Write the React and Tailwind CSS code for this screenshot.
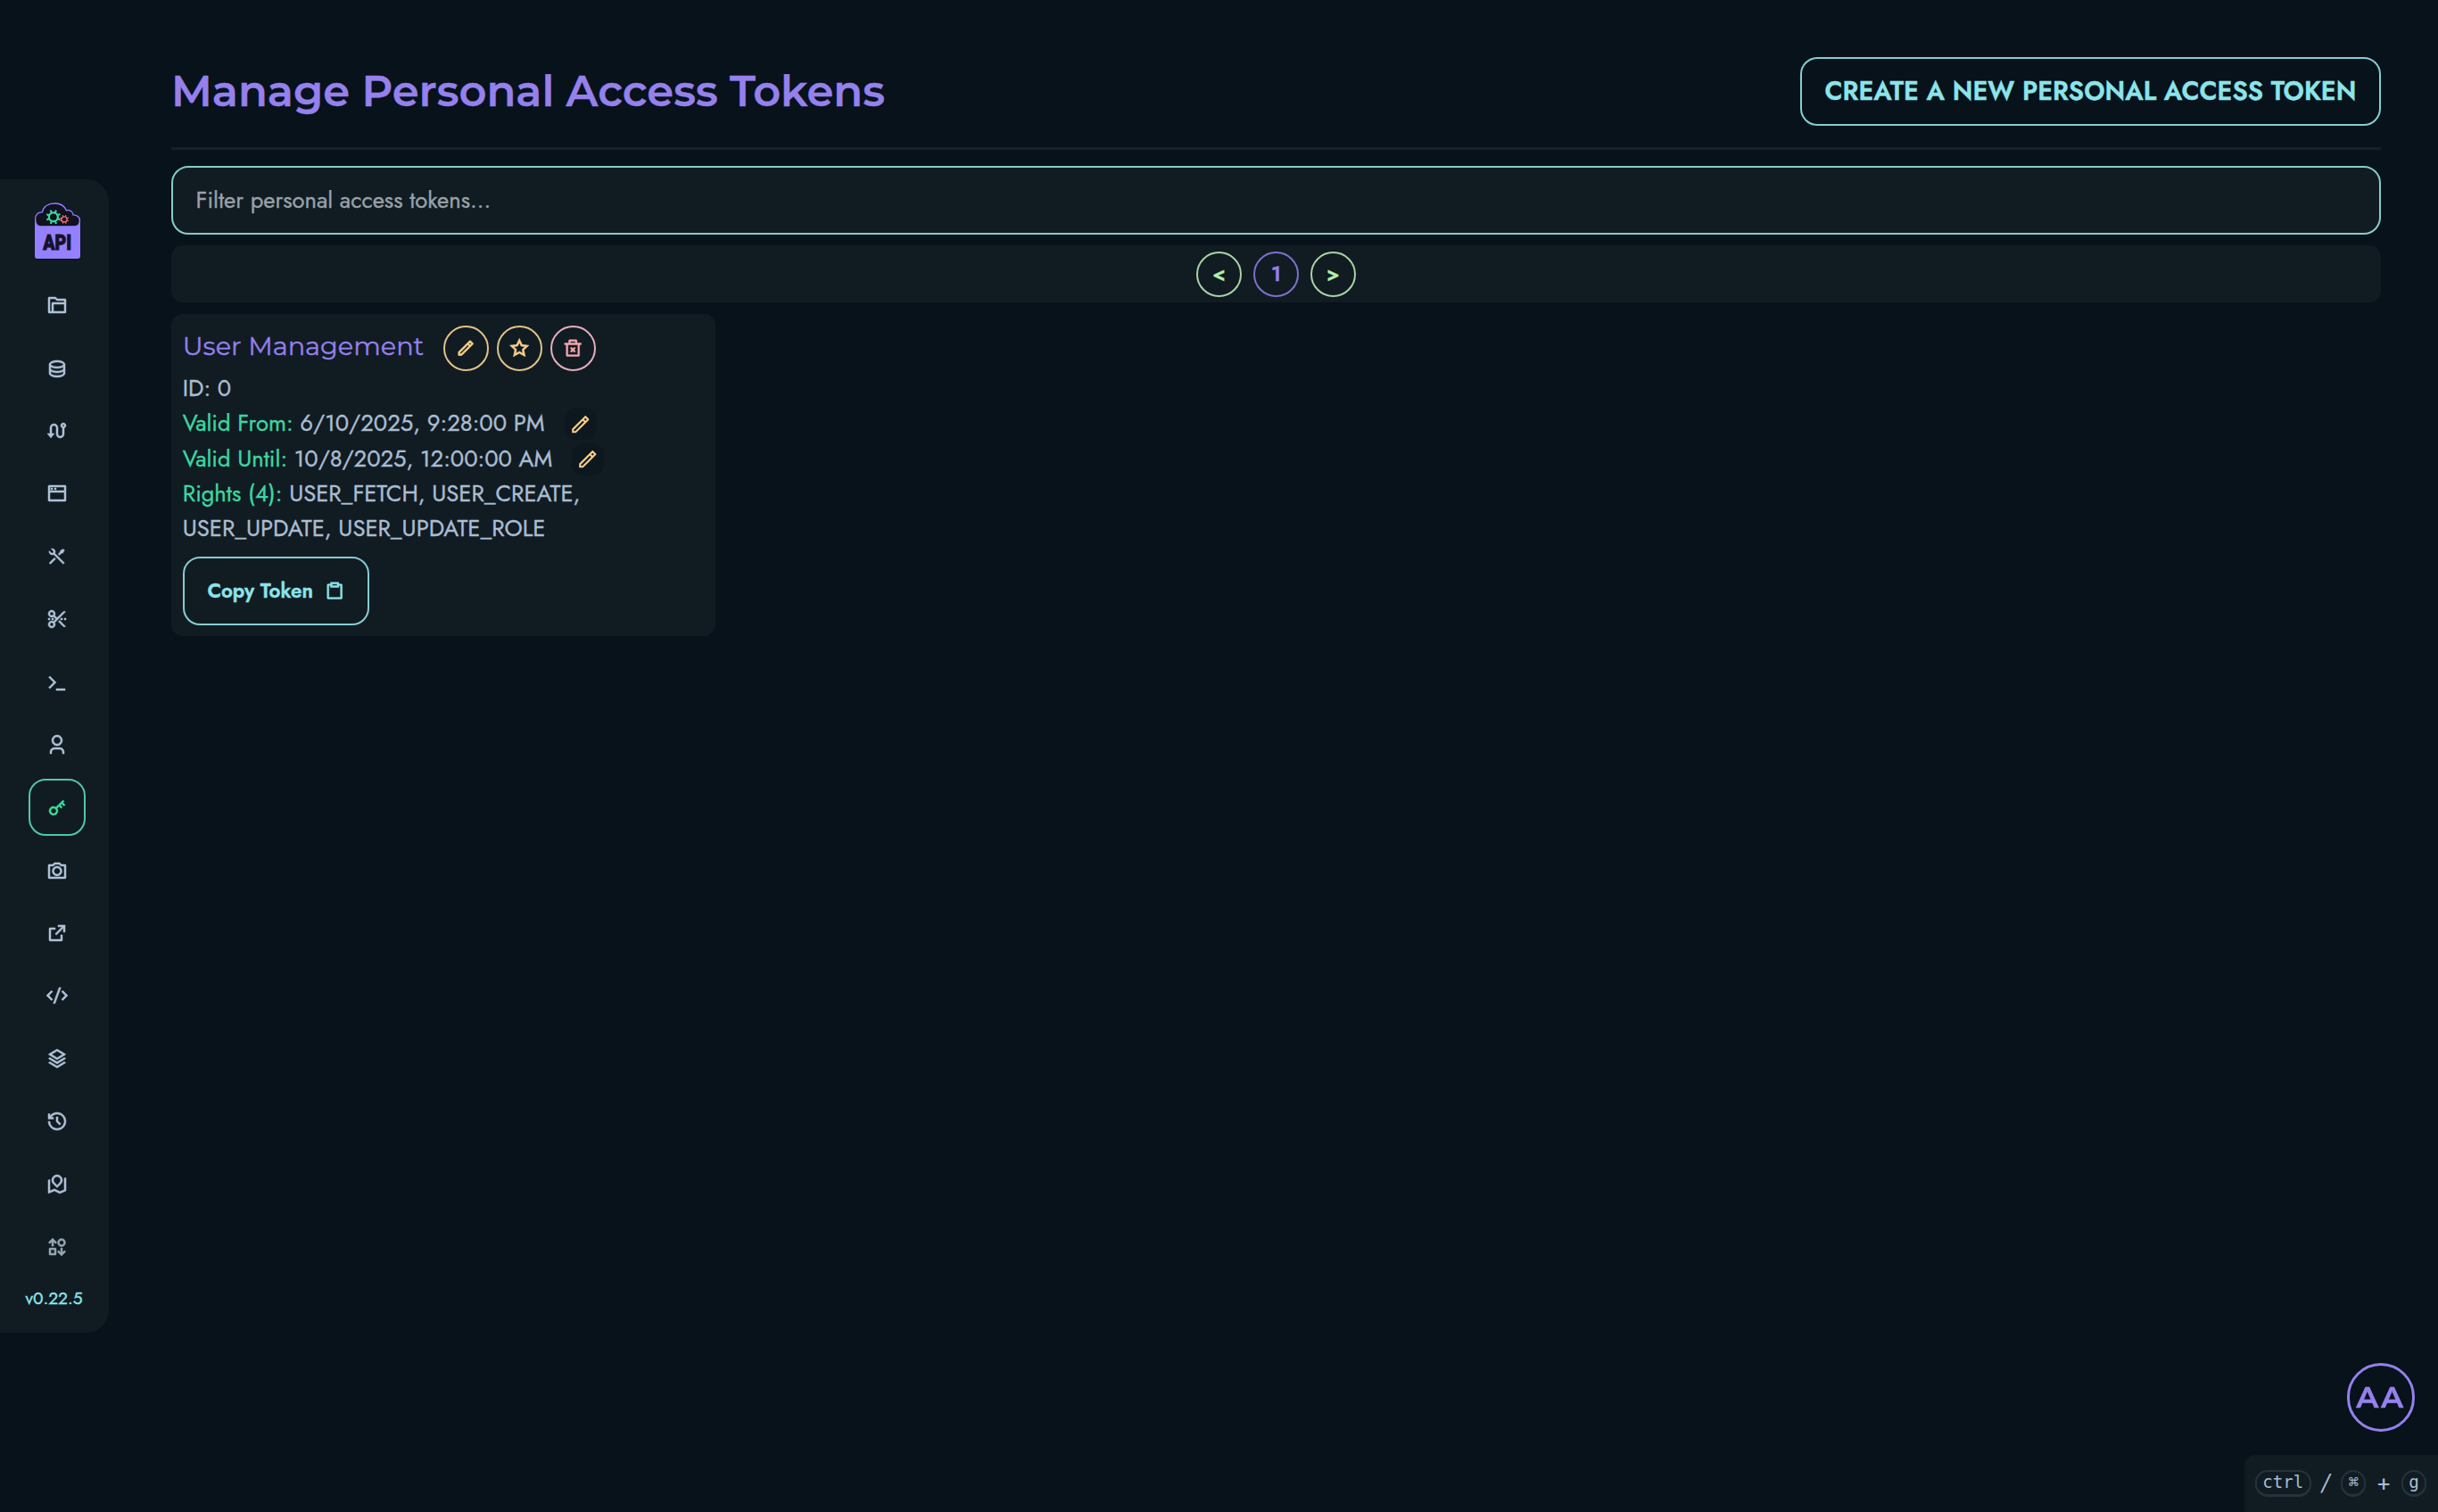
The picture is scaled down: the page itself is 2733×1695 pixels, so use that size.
import {
  RiCameraLine,
  RiClipboardLine,
  RiCodeSSlashLine,
  RiDatabase2Line,
  RiDeleteBin2Line,
  RiExternalLinkLine,
  RiFolder4Line,
  RiHistoryLine,
  RiKey2Line,
  RiPencilLine,
  RiRoadMapLine,
  RiRouteLine,
  RiScissorsCutLine,
  RiStackLine,
  RiStarLine,
  RiSwap3Line,
  RiTerminalLine,
  RiToolsLine,
  RiUser3Line,
  RiWindowLine,
} from "react-icons/ri";
import clsx from "clsx";

const navItems = [
  { name: "collections", Icon: RiFolder4Line },
  { name: "databases", Icon: RiDatabase2Line },
  { name: "routes", Icon: RiRouteLine },
  { name: "pages", Icon: RiWindowLine },
  { name: "tools", Icon: RiToolsLine },
  { name: "snippets", Icon: RiScissorsCutLine },
  { name: "terminal", Icon: RiTerminalLine },
  { name: "users", Icon: RiUser3Line },
  { name: "tokens", Icon: RiKey2Line, active: true },
  { name: "snapshots", Icon: RiCameraLine },
  { name: "links", Icon: RiExternalLinkLine },
  { name: "code", Icon: RiCodeSSlashLine },
  { name: "layers", Icon: RiStackLine },
  { name: "history", Icon: RiHistoryLine },
  { name: "roadmap", Icon: RiRoadMapLine },
  { name: "swap", Icon: RiSwap3Line, muted: true },
];

const token = {
  name: "User Management",
  id: 0,
  validFrom: "6/10/2025, 9:28:00 PM",
  validUntil: "10/8/2025, 12:00:00 AM",
  rights: ["USER_FETCH", "USER_CREATE", "USER_UPDATE", "USER_UPDATE_ROLE"],
};

const Gear = ({ cx, cy, r, teeth, color }) => (
  <g stroke={color} fill="none" transform={`translate(${cx} ${cy})`}>
    <circle r={r} strokeWidth={r * 0.45} />
    {Array.from({ length: teeth }, (_, i) => (
      <path
        key={i}
        d={`M0 ${-r * 1.1}V${-r * 1.65}`}
        strokeWidth={r * 0.42}
        transform={`rotate(${(360 / teeth) * i + 22})`}
      />
    ))}
  </g>
);

const Logo = () => (
  <svg viewBox="0 0 158 193" className="h-16 w-[53px]">
    <rect x="0" y="58" width="158" height="135" rx="13" fill="#0d1020" />
    <rect x="2" y="50" width="154" height="140" rx="9" fill="#9580ff" />
    <path
      d="M22 81C8 81 4 71 4 57C4 42 12 33 27 33C31 14 48 3 70 3C91 3 103 13 109 27C121 24 131 31 132 42C146 43 154 50 154 61C154 74 148 81 136 81Z"
      fill="#111122"
      stroke="#9580ff"
      strokeWidth="4"
    />
    <Gear cx={65} cy={49} r={15} teeth={8} color="#3ddc9c" />
    <Gear cx={102} cy={57} r={9} teeth={8} color="#ff6b6b" />
    <text
      x="30"
      y="161"
      textLength="96"
      lengthAdjust="spacingAndGlyphs"
      className="fill-[#13132a] stroke-[#13132a] stroke-3 font-['Roboto',sans-serif] text-[72px] font-black"
    >
      API
    </text>
  </svg>
);

const Sidebar = () => (
  <aside className="flex h-[1293px] w-[122px] shrink-0 flex-col items-center rounded-r-[25.6px] bg-[#111b22] pt-[25.6px] pl-1.5">
    <Logo />
    <nav className="mt-[19.6px] flex flex-col gap-[6.4px]">
      {navItems.map(({ name, Icon, active, muted }) => (
        <a
          key={name}
          className={clsx(
            "flex size-16 items-center justify-center rounded-[19.2px]",
            active && "border-2 border-[#4fc9a4] text-[#3ddc9c]",
            !active && (muted ? "text-[#97a5b3]" : "text-[#aec2d6]"),
          )}
        >
          <Icon size={24} className="stroke-[0.5]" />
        </a>
      ))}
    </nav>
    <p className="mt-[11.4px] mr-[7px] text-[19.2px] leading-[28.8px] text-[#8be4ea]">v0.22.5</p>
  </aside>
);

const RoundButton = ({ className, children }) => (
  <button
    type="button"
    className={clsx(
      "flex size-[51.2px] items-center justify-center rounded-full border-2 text-[22.4px] font-semibold",
      className,
    )}
  >
    {children}
  </button>
);

const DateRow = ({ label, value }) => (
  <div className="flex h-[39.8px] items-center">
    <p>
      <span className="text-[#3dd6a0]">{label}:</span> {value}
    </p>
    <button
      type="button"
      className="ml-[22px] flex size-9 items-center justify-center rounded-[13px] bg-[#0d171e] text-[#f7d08a]"
    >
      <RiPencilLine size={25.6} />
    </button>
  </div>
);

const TokenCard = ({ token }) => (
  <div className="mt-[12.8px] w-[609.6px] rounded-[12.8px] bg-[#111b22] p-[12.8px] text-[25.6px] leading-[38.4px] text-[#a9bdd1]">
    <div className="flex h-[52.2px] items-start">
      <h2 className="mt-px font-['Montserrat','Inter',sans-serif] text-[28.8px] leading-[43.2px] text-[#9580ec]">
        {token.name}
      </h2>
      <div className="ml-[21.6px] flex gap-[8.8px]">
        <RoundButton className="border-[#e3c288] text-[#f7d08a]">
          <RiPencilLine className="stroke-[0.7]" />
        </RoundButton>
        <RoundButton className="border-[#e3c288] text-[#f7d08a]">
          <RiStarLine className="stroke-[0.7]" />
        </RoundButton>
        <RoundButton className="border-[#e5aebd] text-[#f7a8ae]">
          <RiDeleteBin2Line className="stroke-[0.5]" />
        </RoundButton>
      </div>
    </div>
    <p>ID: {token.id}</p>
    <DateRow label="Valid From" value={token.validFrom} />
    <DateRow label="Valid Until" value={token.validUntil} />
    <p className="w-[480px]">
      <span className="text-[#3dd6a0]">Rights ({token.rights.length}):</span>{" "}
      {token.rights.join(", ")}
    </p>
    <button
      type="button"
      className="mt-[11.8px] flex h-[76.8px] items-center gap-[12.8px] rounded-[19.2px] border-2 border-[#86cdd4] px-[25.6px] text-[22.4px] font-semibold text-[#8be4ea]"
    >
      Copy Token
      <RiClipboardLine className="stroke-[0.6]" />
    </button>
  </div>
);

const Kbd = ({ children }) => (
  <kbd className="flex h-[30px] items-center rounded-[14px] border-2 border-b-3 border-[#26323b] px-[6.2px] font-['DejaVu_Sans_Mono',monospace] text-[19.2px] leading-none">
    {children}
  </kbd>
);

export default function App() {
  return (
    <div className="flex h-screen items-center overflow-hidden bg-[#07121a] font-['Jost','Lato',sans-serif] [-webkit-text-stroke:0.35px]">
      <Sidebar />
      <main className="mr-16 ml-[70px] flex-1 self-start pt-16">
        <header className="flex h-[76.8px] items-center justify-between">
          <h1 className="font-['Montserrat','Inter',sans-serif] text-5xl font-semibold text-[#9580ec]">
            Manage Personal Access Tokens
          </h1>
          <button
            type="button"
            className="h-[76.8px] rounded-[19.2px] border-2 border-[#86cdd4] px-[25.6px] text-[28.8px] font-semibold text-[#8be4ea] uppercase"
          >
            Create a new personal access token
          </button>
        </header>
        <hr className="mt-[24.4px] border-t-3 border-[#16212a]" />
        <input
          type="text"
          placeholder="Filter personal access tokens..."
          className="mt-[17.6px] block h-[76.8px] w-full rounded-[19.2px] border-2 border-[#86cdc8] bg-[#111b22] px-[25.6px] text-[25.6px] outline-none placeholder:text-[#98a1a8]"
        />
        {/* pagination */}
        <div className="mt-[12.8px] flex h-16 items-center justify-center gap-[12.8px] rounded-[12.8px] bg-[#111b22]">
          <RoundButton className="border-[#a9d3a4] text-[#b1eeb0]">&lt;</RoundButton>
          <RoundButton className="border-[#7f70cc] text-[#9580ec]">1</RoundButton>
          <RoundButton className="border-[#a9d3a4] text-[#b1eeb0]">&gt;</RoundButton>
        </div>
        <TokenCard token={token} />
      </main>

      {/* account bubble */}
      <button
        type="button"
        className="fixed right-[25.6px] bottom-[90px] flex size-[76.8px] items-center justify-center rounded-full border-3 border-[#9580ec] font-['Montserrat','Inter',sans-serif] text-[33px] font-semibold tracking-[2.6px] text-[#9580ec] [-webkit-text-stroke:0.7px]"
      >
        AA
      </button>
      {/* shortcut hint */}
      <div className="fixed right-0 bottom-0 flex h-16 w-[217px] items-center rounded-tl-[12.8px] bg-[#111b22] pb-px pl-[12px] text-[25.6px] text-[#a9bdd1] [-webkit-text-stroke:0]">
        <Kbd>ctrl</Kbd>
        <span className="w-[33.6px] text-center">/</span>
        <Kbd>⌘</Kbd>
        <span className="w-[40px] text-center">+</span>
        <Kbd>g</Kbd>
      </div>
    </div>
  );
}
